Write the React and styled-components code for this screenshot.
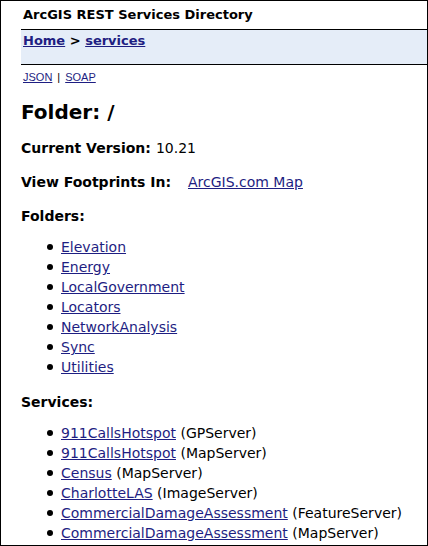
import React from "react";
import styled, { createGlobalStyle } from "styled-components";

const Global = createGlobalStyle`
  *, *::before, *::after { box-sizing: border-box; }
  body {
    margin: 0;
    background: #fff;
    color: #000;
    font: 14px/20px "DejaVu Sans", Verdana, sans-serif;
  }
`;

const Page = styled.div`
  min-height: 100vh;
  padding-left: 20px;
  border: 1px solid #000;
`;

const Title = styled.header`
  padding: 4px 2px;
  font-size: 13px;
  font-weight: bold;
`;

const Breadcrumbs = styled.nav`
  min-height: 36px;
  padding: 1px 2px;
  border-top: 1px solid #000;
  border-bottom: 1px solid #000;
  background: #e5edf8;
  font-size: 13px;
  font-weight: bold;
`;

const Link = styled.a`
  color: #1e1e82;
  text-decoration: underline;
`;

const Formats = styled.div`
  display: flex;
  gap: 5px;
  padding: 4px 2px 0;
  font: 11px/16px "Liberation Sans", Arial, sans-serif;
`;

const Heading = styled.h1`
  margin: 15px 0 14px;
  font-size: 20px;
  line-height: 24px;
`;

const Line = styled.p`
  margin: 0 0 14px;
`;

const Label = styled.b`
  margin-right: ${(p) => (p.$wide ? "17px" : "5px")};
`;

const SectionTitle = styled.h2`
  margin: 0 0 11px;
  font-size: 14px;
  line-height: 20px;
`;

const List = styled.ul`
  margin: 0;
  padding-left: 26px;
  list-style: none;

  & + ${SectionTitle} {
    margin-top: 15px;
  }
`;

const Item = styled.li`
  display: flex;
  align-items: baseline;

  &::before {
    content: "";
    flex: none;
    align-self: center;
    width: 6px;
    height: 6px;
    margin-right: 8px;
    border-radius: 50%;
    background: #000;
  }
`;

const folders = ["Elevation", "Energy", "LocalGovernment", "Locators", "NetworkAnalysis", "Sync", "Utilities"];

const services = [
  ["911CallsHotspot", "GPServer"],
  ["911CallsHotspot", "MapServer"],
  ["Census", "MapServer"],
  ["CharlotteLAS", "ImageServer"],
  ["CommercialDamageAssessment", "FeatureServer"],
  ["CommercialDamageAssessment", "MapServer"],
];

export default function App() {
  return (
    <Page>
      <Global />
      <Title>ArcGIS REST Services Directory</Title>
      <Breadcrumbs aria-label="Breadcrumb">
        <Link href="#home">Home</Link> &gt; <Link href="#services">services</Link>
      </Breadcrumbs>
      <Formats>
        <Link href="#json">JSON</Link>
        <span>|</span>
        <Link href="#soap">SOAP</Link>
      </Formats>
      <main>
        <Heading>Folder: /</Heading>
        <Line><Label>Current Version:</Label>10.21</Line>
        <Line><Label $wide>View Footprints In:</Label><Link href="#map">ArcGIS.com Map</Link></Line>
        <SectionTitle>Folders:</SectionTitle>
        <List>
          {folders.map((name) => (
            <Item key={name}><Link href={`#${name}`}>{name}</Link></Item>
          ))}
        </List>
        <SectionTitle>Services:</SectionTitle>
        <List>
          {services.map(([name, type]) => (
            <Item key={name + type}>
              <span><Link href={`#${name}/${type}`}>{name}</Link> ({type})</span>
            </Item>
          ))}
        </List>
      </main>
    </Page>
  );
}
